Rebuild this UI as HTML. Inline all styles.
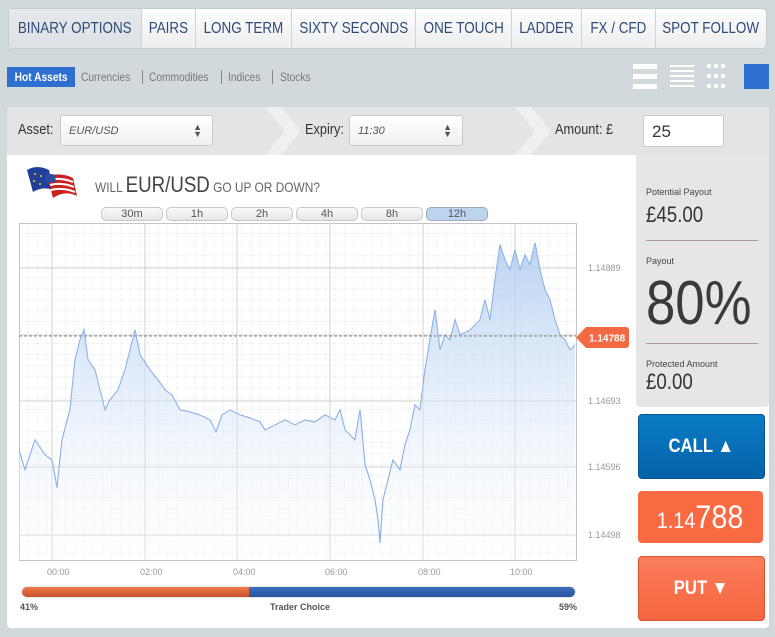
<!DOCTYPE html>
<html><head><style>
*{box-sizing:border-box;margin:0;padding:0}
body{width:775px;height:637px;background:#d2d9dc;font-family:"Liberation Sans",sans-serif;position:relative;overflow:hidden}
.abs{position:absolute}
.tabs{left:8px;top:8px;width:759px;height:41px;border-radius:5px;background:linear-gradient(#fdfdfd,#eceeef);border:1px solid #c5ccd0;display:flex}
.tabs div{height:100%;display:flex;align-items:center;justify-content:center;color:#2f4a78;font-size:16px;border-right:1px solid #cfd3d6;white-space:nowrap}
.tabs span{display:inline-block;transform:scaleX(.84)}
.f{top:67px;height:20px;font-size:12px;color:#777;display:flex;align-items:center}
.f span{display:inline-block}
.panel{left:7px;top:107px;width:762px;height:521px;background:#fff;border-radius:4px}
.sel{background:linear-gradient(#fff,#f0f0f0);border:1px solid #c9c9c9;border-radius:3px;font-size:11px;font-style:italic;color:#555;padding-left:8px;display:flex;align-items:center}
.tf{top:207px;height:14px;width:62px;border:1px solid #c8c8c8;border-radius:5px;background:linear-gradient(#fafafa,#e6e6e6);font-size:11px;color:#555;text-align:center;line-height:12px}
.yl{left:588px;font-size:9px;color:#999}
.xl{top:567px;font-size:9px;color:#999}
.n{display:inline-block;transform:scaleX(.85);transform-origin:left}
</style></head><body>
<div class="abs tabs">
<div style="width:133px;background:linear-gradient(#e6e9eb,#dde1e3)"><span>BINARY OPTIONS</span></div>
<div style="width:54px"><span>PAIRS</span></div>
<div style="width:97px"><span>LONG TERM</span></div>
<div style="width:124px"><span>SIXTY SECONDS</span></div>
<div style="width:96px"><span>ONE TOUCH</span></div>
<div style="width:70px"><span>LADDER</span></div>
<div style="width:74px"><span>FX / CFD</span></div>
<div style="width:110px;border:none"><span>SPOT FOLLOW</span></div>
</div>
<div class="abs f" style="left:7px"><span style="background:#2f6fd0;color:#fff;height:20px;line-height:20px;width:68px;text-align:center;font-size:12px"><span style="transform:scaleX(.85);font-weight:bold">Hot Assets</span></span><span style="padding:0 6px;border-right:1px solid #888;width:68px"><span class="n">Currencies</span></span><span style="padding:0 6px;border-right:1px solid #888;width:79px"><span class="n">Commodities</span></span><span style="padding:0 6px;border-right:1px solid #888;width:51px"><span class="n">Indices</span></span><span style="padding:0 7px"><span class="n">Stocks</span></span></div>
<svg class="abs" style="left:633px;top:64px" width="136" height="26">
<g fill="#fff"><rect x="0" y="0" width="24" height="5"/><rect x="0" y="10" width="24" height="5"/><rect x="0" y="20" width="24" height="5"/>
<rect x="37" y="1" width="24" height="2"/><rect x="37" y="6" width="24" height="2"/><rect x="37" y="11" width="24" height="2"/><rect x="37" y="16" width="24" height="2"/><rect x="37" y="21" width="24" height="2"/>
<rect x="74" y="0" width="4" height="4"/><rect x="81" y="0" width="4" height="4"/><rect x="88" y="0" width="4" height="4"/><rect x="74" y="10" width="4" height="4"/><rect x="81" y="10" width="4" height="4"/><rect x="88" y="10" width="4" height="4"/><rect x="74" y="20" width="4" height="4"/><rect x="81" y="20" width="4" height="4"/><rect x="88" y="20" width="4" height="4"/></g>
<rect x="111" y="0" width="25" height="25" fill="#2f6fd0"/></svg>
<div class="abs panel"></div>
<svg class="abs" style="left:7px;top:107px" width="762" height="48"><path d="M4 0H758a4 4 0 0 1 4 4V48H0V4a4 4 0 0 1 4-4z" fill="#e4e4e4"/>
<path d="M258 0h16l20 24l-20 24h-16l20-24z M508 0h16l20 24l-20 24h-16l20-24z" fill="#f0f0f0"/></svg>
<div class="abs" style="left:18px;top:121px;font-size:15px;color:#333"><span class="n">Asset:</span></div>
<div class="abs sel" style="left:60px;top:115px;width:153px;height:31px">EUR/USD<span style="position:absolute;right:10px;font-style:normal;font-size:9px;line-height:7px;text-align:center">▲<br>▼</span></div>
<div class="abs" style="left:305px;top:121px;font-size:15px;color:#333"><span class="n">Expiry:</span></div>
<div class="abs sel" style="left:349px;top:115px;width:114px;height:31px">11:30<span style="position:absolute;right:10px;font-style:normal;font-size:9px;line-height:7px;text-align:center">▲<br>▼</span></div>
<div class="abs" style="left:555px;top:121px;font-size:15px;color:#333"><span class="n">Amount: £</span></div>
<div class="abs" style="left:643px;top:115px;width:81px;height:32px;border:1px solid #c9c9c9;border-radius:3px;background:#fff;font-size:17px;color:#333;padding:6px 0 0 8px">25</div>
<svg class="abs" style="left:25px;top:166px" width="56" height="36"><path d="M2 4q10-6 22 0l4 20q-10-4-20 2z" fill="#1f3f9a"/><path d="M22 10q14-4 26 2l4 18q-12-6-24 2z" fill="#c22"/><path d="M24 14q12-3 24 2M25 19q12-3 24 2M26 24q12-3 24 2" stroke="#fff" stroke-width="2" fill="none"/><path d="M20 9q6-2 10 0l1 8q-5-2-10 0z" fill="#2b4ea0"/><g fill="#f5d000"><circle cx="10" cy="8" r="1"/><circle cx="16" cy="10" r="1"/><circle cx="9" cy="15" r="1"/><circle cx="15" cy="18" r="1"/></g></svg>
<div class="abs" style="left:95px;top:172px;color:#666;font-size:14px;white-space:nowrap"><span class="n">WILL <span style="font-size:22px;color:#444">EUR/USD</span> GO UP OR DOWN?</span></div>
<div class="abs tf" style="left:101px">30m</div><div class="abs tf" style="left:166px">1h</div><div class="abs tf" style="left:231px">2h</div><div class="abs tf" style="left:296px">4h</div><div class="abs tf" style="left:361px">8h</div><div class="abs tf" style="left:426px;background:#bcd4ee;border-color:#9ab">12h</div>
<svg class="abs" style="left:19px;top:223px" width="560" height="340">
<defs><pattern id="g" width="9.3" height="11" patternUnits="userSpaceOnUse"><path d="M9.3 0V11M0 11H9.3" stroke="#e2e2e2" stroke-dasharray="1 1" fill="none"/></pattern>
<linearGradient id="fl" x1="0" y1="0" x2="0" y2="1"><stop offset="0" stop-color="#a9c8ef"/><stop offset="1" stop-color="#fff" stop-opacity=".3"/></linearGradient></defs>
<rect x="0.5" y="0.5" width="557" height="337" fill="url(#g)" stroke="#c4c4c4"/>
<g stroke="#d0d0d0"><path d="M33 0V337M126 0V337M218 0V337M311 0V337M404 0V337M496 0V337M0 45H557M0 112H557M0 178H557M0 244H557M0 312H557"/></g>
<path d="M0 227L6 247L16 217L26 232L33 237L38 265L43 217L51 187L56 137L61 117L65 107L69 137L76 147L81 167L86 187L91 177L99 167L106 147L111 127L116 107L121 132L131 147L139 157L146 167L153 172L161 187L171 189L181 192L191 197L197 209L203 192L211 187L221 192L231 195L241 199L246 207L256 202L266 197L276 202L286 197L296 199L306 192L316 197L321 187L326 207L336 217L341 187L346 242L351 257L356 277L359 297L361 320L364 277L369 257L374 237L381 247L386 222L391 207L396 182L401 187L406 147L411 117L416 87L421 127L426 112L431 117L436 97L441 112L451 107L461 97L466 77L471 97L476 57L481 22L486 37L491 47L496 27L501 47L506 32L511 42L516 20L521 47L526 67L531 77L536 97L541 112L546 117L551 127L556 122" fill="none" stroke="#7aa6e4" stroke-width="1.2"/>
<path d="M0 227L6 247L16 217L26 232L33 237L38 265L43 217L51 187L56 137L61 117L65 107L69 137L76 147L81 167L86 187L91 177L99 167L106 147L111 127L116 107L121 132L131 147L139 157L146 167L153 172L161 187L171 189L181 192L191 197L197 209L203 192L211 187L221 192L231 195L241 199L246 207L256 202L266 197L276 202L286 197L296 199L306 192L316 197L321 187L326 207L336 217L341 187L346 242L351 257L356 277L359 297L361 320L364 277L369 257L374 237L381 247L386 222L391 207L396 182L401 187L406 147L411 117L416 87L421 127L426 112L431 117L436 97L441 112L451 107L461 97L466 77L471 97L476 57L481 22L486 37L491 47L496 27L501 47L506 32L511 42L516 20L521 47L526 67L531 77L536 97L541 112L546 117L551 127L556 122V337H0Z" fill="url(#fl)" opacity=".8"/>
<path d="M0 113H557" stroke="#888" stroke-dasharray="3 2"/>
</svg>
<div class="abs yl" style="top:263px">1.14889</div><div class="abs yl" style="top:396px">1.14693</div><div class="abs yl" style="top:462px">1.14596</div><div class="abs yl" style="top:530px">1.14498</div>
<svg class="abs" style="left:576px;top:327px" width="53" height="21"><path d="M0 10.5L10 0H50a3 3 0 0 1 3 3V18a3 3 0 0 1-3 3H10z" fill="#f26a43"/><text x="13" y="14.5" fill="#fff" font-size="10" font-weight="bold" font-family="Liberation Sans">1.14788</text></svg>
<div class="abs xl" style="left:47px">00:00</div><div class="abs xl" style="left:140px">02:00</div><div class="abs xl" style="left:233px">04:00</div><div class="abs xl" style="left:325px">06:00</div><div class="abs xl" style="left:418px">08:00</div><div class="abs xl" style="left:510px">10:00</div>
<div class="abs" style="left:21px;top:586px;width:555px;height:12px;border-radius:6px;background:#e6e6e6;padding:1px"><div style="width:100%;height:10px;border-radius:5px;overflow:hidden;display:flex"><div style="width:41%;background:linear-gradient(#f07a4a,#c9502a)"></div><div style="flex:1;background:linear-gradient(#3d6fbf,#2a529a)"></div></div></div>
<div class="abs" style="left:20px;top:602px;font-size:9px;font-weight:bold;color:#555">41%</div>
<div class="abs" style="left:270px;top:602px;font-size:9px;font-weight:bold;color:#555">Trader Choice</div>
<div class="abs" style="left:559px;top:602px;font-size:9px;font-weight:bold;color:#555">59%</div>
<div class="abs" style="left:636px;top:155px;width:133px;height:252px;background:#e6e6e6;border-radius:0 0 4px 4px"></div>
<div class="abs" style="left:646px;top:187px;font-size:9px;color:#444">Potential Payout</div>
<div class="abs" style="left:646px;top:202px;font-size:22px;color:#333"><span class="n">£45.00</span></div>
<div class="abs" style="left:646px;top:240px;width:112px;height:1px;background:#a99"></div>
<div class="abs" style="left:646px;top:256px;font-size:9px;color:#444">Payout</div>
<div class="abs" style="left:646px;top:268px;font-size:62px;color:#3a3a3a"><span class="n">80%</span></div>
<div class="abs" style="left:646px;top:343px;width:112px;height:1px;background:#a99"></div>
<div class="abs" style="left:646px;top:359px;font-size:9px;color:#444">Protected Amount</div>
<div class="abs" style="left:646px;top:369px;font-size:22px;color:#333"><span class="n">£0.00</span></div>
<div class="abs" style="left:638px;top:414px;width:127px;height:65px;border-radius:4px;background:linear-gradient(#0b7cc4,#0462a8);border:1px solid #0a5590;color:#fff;font-size:19px;font-weight:bold;text-align:center;line-height:63px"><span style="display:inline-block;transform:scaleX(.88)">CALL ▲</span></div>
<div class="abs" style="left:638px;top:491px;width:125px;height:52px;border-radius:4px;background:#f96a43;color:#fff;text-align:center;line-height:52px;font-size:22px"><span style="display:inline-block;transform:scaleX(.9)">1.14<span style="font-size:32px">788</span></span></div>
<div class="abs" style="left:638px;top:556px;width:127px;height:65px;border-radius:4px;background:linear-gradient(#fb7d5b,#f5653f);border:1px solid #d9532f;color:#fff;font-size:19px;font-weight:bold;text-align:center;line-height:63px"><span style="display:inline-block;transform:scaleX(.88)">PUT ▼</span></div>
</body></html>
